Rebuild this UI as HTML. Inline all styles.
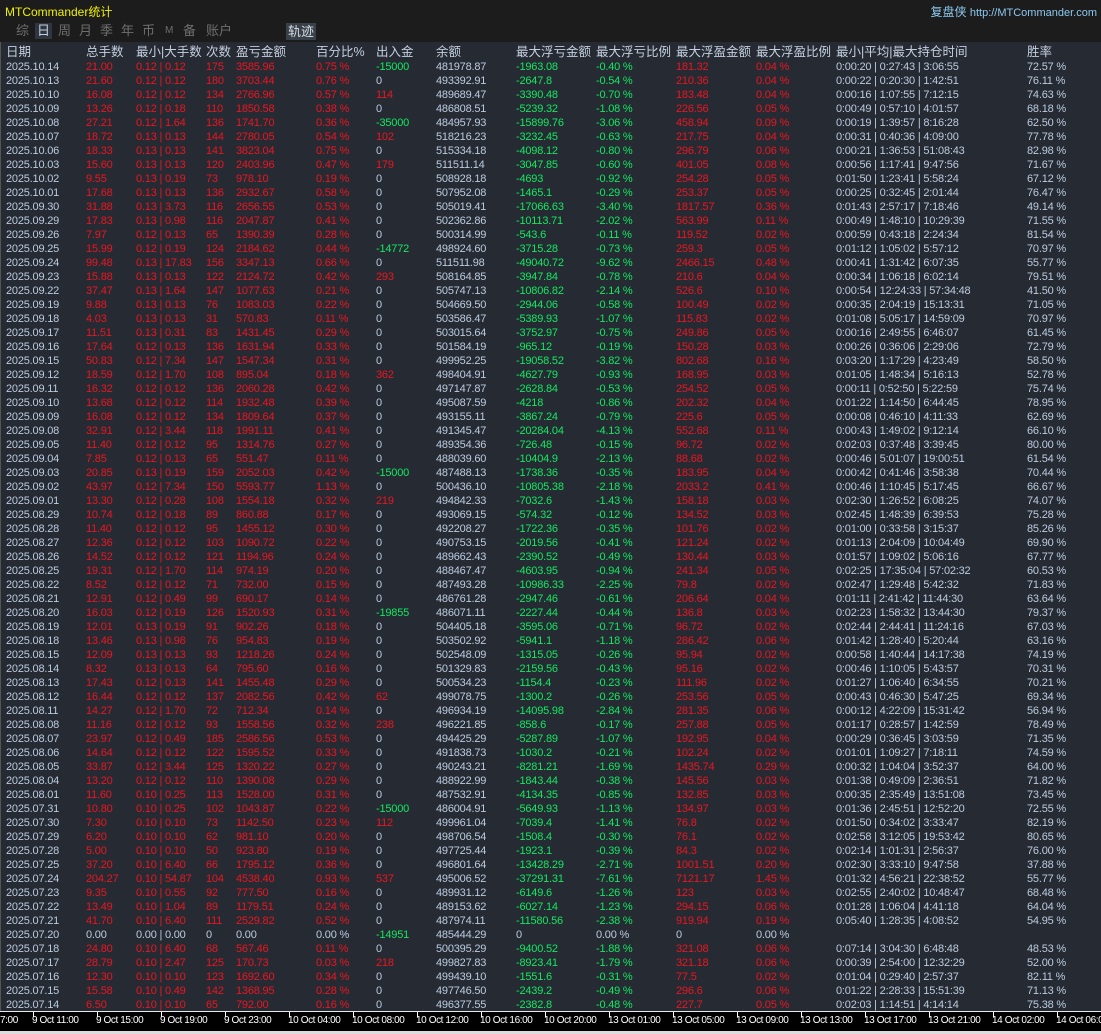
<!DOCTYPE html>
<html><head><meta charset="utf-8"><style>
*{margin:0;padding:0;box-sizing:border-box}
body{width:1101px;height:1034px;background:#dcdcdc;position:relative;overflow:hidden;font-family:"Liberation Sans","Noto Sans CJK SC",sans-serif}
#top{position:absolute;left:0;top:0;width:1101px;height:42px;background:#1c1c1c}
#title{position:absolute;left:5px;top:3px;color:#f0f000;font-size:12px}
#right{position:absolute;right:4px;top:3px;color:#8cc8f0;font-size:12px}
#right span{font-size:11px}
.tab{position:absolute;top:23px;font-size:13px;color:#6e6e6e;line-height:16px}
#sel{background:#2f3641;color:#c4cfdf;padding:0 2px}
#trk{position:absolute;left:286px;top:23px;background:#394049;color:#d8dde5;font-size:13px;line-height:17px;padding:0 2px}
#main{position:absolute;left:0;top:42px;width:1101px;height:969px;background:#262b33;border-left:1px solid #555}
table{position:absolute;left:5px;top:2px;border-collapse:collapse;table-layout:fixed;width:1096px}
td{padding:0;white-space:nowrap;font-size:11px;height:14px;line-height:14px;color:#bccbe0;overflow:hidden;letter-spacing:-0.2px}
tr.h td{font-size:12.5px;height:16px;line-height:16px;color:#c4cfdf;letter-spacing:0}
.r{color:#ec1520}.g{color:#12e860}
#axis{position:absolute;left:0;top:1011px;width:1101px;height:20px;background:#000;border-top:1px solid #e8e8e8}
.lb{position:absolute;top:3px;color:#fff;font-size:10px;letter-spacing:-0.4px;white-space:nowrap}
.tk{position:absolute;top:0;width:1px;height:5px;background:#fff}
</style></head><body>
<div id="top">
<div id="title">MTCommander统计</div>
<div id="right">复盘侠 <span>http://MTCommander.com</span></div>
<div class="tab" style="left:16px">综</div>
<div class="tab" id="sel" style="left:35px">日</div>
<div class="tab" style="left:58px">周</div>
<div class="tab" style="left:79px">月</div>
<div class="tab" style="left:100px">季</div>
<div class="tab" style="left:121px">年</div>
<div class="tab" style="left:142px">币</div>
<div class="tab" style="left:165px;font-size:10px">M</div>
<div class="tab" style="left:183px">备</div>
<div class="tab" style="left:206px">账户</div>
<div id="trk">轨迹</div>
</div>
<div id="main">
<table>
<colgroup><col style="width:80px"><col style="width:50px"><col style="width:70px"><col style="width:30px"><col style="width:80px"><col style="width:60px"><col style="width:60px"><col style="width:80px"><col style="width:80px"><col style="width:80px"><col style="width:80px"><col style="width:80px"><col style="width:191px"><col style="width:75px"></colgroup>
<tr class="h"><td>日期<td>总手数<td>最小|大手数<td>次数<td>盈亏金额<td>百分比%<td>出入金<td>余额<td>最大浮亏金额<td>最大浮亏比例<td>最大浮盈金额<td>最大浮盈比例<td>最小|平均|最大持仓时间<td>胜率
<tr><td>2025.10.14<td class=r>21.00<td class=r>0.12 | 0.12<td class=r>175<td class=r>3585.96<td class=r>0.75 %<td class=g>-15000<td>481978.87<td class=g>-1963.08<td class=g>-0.40 %<td class=r>181.32<td class=r>0.04 %<td>0:00:20 | 0:27:43 | 3:06:55<td>72.57 %
<tr><td>2025.10.13<td class=r>21.60<td class=r>0.12 | 0.12<td class=r>180<td class=r>3703.44<td class=r>0.76 %<td>0<td>493392.91<td class=g>-2647.8<td class=g>-0.54 %<td class=r>210.36<td class=r>0.04 %<td>0:00:22 | 0:20:30 | 1:42:51<td>76.11 %
<tr><td>2025.10.10<td class=r>16.08<td class=r>0.12 | 0.12<td class=r>134<td class=r>2766.96<td class=r>0.57 %<td class=r>114<td>489689.47<td class=g>-3390.48<td class=g>-0.70 %<td class=r>183.48<td class=r>0.04 %<td>0:00:16 | 1:07:55 | 7:12:15<td>74.63 %
<tr><td>2025.10.09<td class=r>13.26<td class=r>0.12 | 0.18<td class=r>110<td class=r>1850.58<td class=r>0.38 %<td>0<td>486808.51<td class=g>-5239.32<td class=g>-1.08 %<td class=r>226.56<td class=r>0.05 %<td>0:00:49 | 0:57:10 | 4:01:57<td>68.18 %
<tr><td>2025.10.08<td class=r>27.21<td class=r>0.12 | 1.64<td class=r>136<td class=r>1741.70<td class=r>0.36 %<td class=g>-35000<td>484957.93<td class=g>-15899.76<td class=g>-3.06 %<td class=r>458.94<td class=r>0.09 %<td>0:00:19 | 1:39:57 | 8:16:28<td>62.50 %
<tr><td>2025.10.07<td class=r>18.72<td class=r>0.13 | 0.13<td class=r>144<td class=r>2780.05<td class=r>0.54 %<td class=r>102<td>518216.23<td class=g>-3232.45<td class=g>-0.63 %<td class=r>217.75<td class=r>0.04 %<td>0:00:31 | 0:40:36 | 4:09:00<td>77.78 %
<tr><td>2025.10.06<td class=r>18.33<td class=r>0.13 | 0.13<td class=r>141<td class=r>3823.04<td class=r>0.75 %<td>0<td>515334.18<td class=g>-4098.12<td class=g>-0.80 %<td class=r>296.79<td class=r>0.06 %<td>0:00:21 | 1:36:53 | 51:08:43<td>82.98 %
<tr><td>2025.10.03<td class=r>15.60<td class=r>0.13 | 0.13<td class=r>120<td class=r>2403.96<td class=r>0.47 %<td class=r>179<td>511511.14<td class=g>-3047.85<td class=g>-0.60 %<td class=r>401.05<td class=r>0.08 %<td>0:00:56 | 1:17:41 | 9:47:56<td>71.67 %
<tr><td>2025.10.02<td class=r>9.55<td class=r>0.13 | 0.19<td class=r>73<td class=r>978.10<td class=r>0.19 %<td>0<td>508928.18<td class=g>-4693<td class=g>-0.92 %<td class=r>254.28<td class=r>0.05 %<td>0:01:50 | 1:23:41 | 5:58:24<td>67.12 %
<tr><td>2025.10.01<td class=r>17.68<td class=r>0.13 | 0.13<td class=r>136<td class=r>2932.67<td class=r>0.58 %<td>0<td>507952.08<td class=g>-1465.1<td class=g>-0.29 %<td class=r>253.37<td class=r>0.05 %<td>0:00:25 | 0:32:45 | 2:01:44<td>76.47 %
<tr><td>2025.09.30<td class=r>31.88<td class=r>0.13 | 3.73<td class=r>116<td class=r>2656.55<td class=r>0.53 %<td>0<td>505019.41<td class=g>-17066.63<td class=g>-3.40 %<td class=r>1817.57<td class=r>0.36 %<td>0:01:43 | 2:57:17 | 7:18:46<td>49.14 %
<tr><td>2025.09.29<td class=r>17.83<td class=r>0.13 | 0.98<td class=r>116<td class=r>2047.87<td class=r>0.41 %<td>0<td>502362.86<td class=g>-10113.71<td class=g>-2.02 %<td class=r>563.99<td class=r>0.11 %<td>0:00:49 | 1:48:10 | 10:29:39<td>71.55 %
<tr><td>2025.09.26<td class=r>7.97<td class=r>0.12 | 0.13<td class=r>65<td class=r>1390.39<td class=r>0.28 %<td>0<td>500314.99<td class=g>-543.6<td class=g>-0.11 %<td class=r>119.52<td class=r>0.02 %<td>0:00:59 | 0:43:18 | 2:24:34<td>81.54 %
<tr><td>2025.09.25<td class=r>15.99<td class=r>0.12 | 0.19<td class=r>124<td class=r>2184.62<td class=r>0.44 %<td class=g>-14772<td>498924.60<td class=g>-3715.28<td class=g>-0.73 %<td class=r>259.3<td class=r>0.05 %<td>0:01:12 | 1:05:02 | 5:57:12<td>70.97 %
<tr><td>2025.09.24<td class=r>99.48<td class=r>0.13 | 17.83<td class=r>156<td class=r>3347.13<td class=r>0.66 %<td>0<td>511511.98<td class=g>-49040.72<td class=g>-9.62 %<td class=r>2466.15<td class=r>0.48 %<td>0:00:41 | 1:31:42 | 6:07:35<td>55.77 %
<tr><td>2025.09.23<td class=r>15.88<td class=r>0.13 | 0.13<td class=r>122<td class=r>2124.72<td class=r>0.42 %<td class=r>293<td>508164.85<td class=g>-3947.84<td class=g>-0.78 %<td class=r>210.6<td class=r>0.04 %<td>0:00:34 | 1:06:18 | 6:02:14<td>79.51 %
<tr><td>2025.09.22<td class=r>37.47<td class=r>0.13 | 1.64<td class=r>147<td class=r>1077.63<td class=r>0.21 %<td>0<td>505747.13<td class=g>-10806.82<td class=g>-2.14 %<td class=r>526.6<td class=r>0.10 %<td>0:00:54 | 12:24:33 | 57:34:48<td>41.50 %
<tr><td>2025.09.19<td class=r>9.88<td class=r>0.13 | 0.13<td class=r>76<td class=r>1083.03<td class=r>0.22 %<td>0<td>504669.50<td class=g>-2944.06<td class=g>-0.58 %<td class=r>100.49<td class=r>0.02 %<td>0:00:35 | 2:04:19 | 15:13:31<td>71.05 %
<tr><td>2025.09.18<td class=r>4.03<td class=r>0.13 | 0.13<td class=r>31<td class=r>570.83<td class=r>0.11 %<td>0<td>503586.47<td class=g>-5389.93<td class=g>-1.07 %<td class=r>115.83<td class=r>0.02 %<td>0:01:08 | 5:05:17 | 14:59:09<td>70.97 %
<tr><td>2025.09.17<td class=r>11.51<td class=r>0.13 | 0.31<td class=r>83<td class=r>1431.45<td class=r>0.29 %<td>0<td>503015.64<td class=g>-3752.97<td class=g>-0.75 %<td class=r>249.86<td class=r>0.05 %<td>0:00:16 | 2:49:55 | 6:46:07<td>61.45 %
<tr><td>2025.09.16<td class=r>17.64<td class=r>0.12 | 0.13<td class=r>136<td class=r>1631.94<td class=r>0.33 %<td>0<td>501584.19<td class=g>-965.12<td class=g>-0.19 %<td class=r>150.28<td class=r>0.03 %<td>0:00:26 | 0:36:06 | 2:29:06<td>72.79 %
<tr><td>2025.09.15<td class=r>50.83<td class=r>0.12 | 7.34<td class=r>147<td class=r>1547.34<td class=r>0.31 %<td>0<td>499952.25<td class=g>-19058.52<td class=g>-3.82 %<td class=r>802.68<td class=r>0.16 %<td>0:03:20 | 1:17:29 | 4:23:49<td>58.50 %
<tr><td>2025.09.12<td class=r>18.59<td class=r>0.12 | 1.70<td class=r>108<td class=r>895.04<td class=r>0.18 %<td class=r>362<td>498404.91<td class=g>-4627.79<td class=g>-0.93 %<td class=r>168.95<td class=r>0.03 %<td>0:01:05 | 1:48:34 | 5:16:13<td>52.78 %
<tr><td>2025.09.11<td class=r>16.32<td class=r>0.12 | 0.12<td class=r>136<td class=r>2060.28<td class=r>0.42 %<td>0<td>497147.87<td class=g>-2628.84<td class=g>-0.53 %<td class=r>254.52<td class=r>0.05 %<td>0:00:11 | 0:52:50 | 5:22:59<td>75.74 %
<tr><td>2025.09.10<td class=r>13.68<td class=r>0.12 | 0.12<td class=r>114<td class=r>1932.48<td class=r>0.39 %<td>0<td>495087.59<td class=g>-4218<td class=g>-0.86 %<td class=r>202.32<td class=r>0.04 %<td>0:01:22 | 1:14:50 | 6:44:45<td>78.95 %
<tr><td>2025.09.09<td class=r>16.08<td class=r>0.12 | 0.12<td class=r>134<td class=r>1809.64<td class=r>0.37 %<td>0<td>493155.11<td class=g>-3867.24<td class=g>-0.79 %<td class=r>225.6<td class=r>0.05 %<td>0:00:08 | 0:46:10 | 4:11:33<td>62.69 %
<tr><td>2025.09.08<td class=r>32.91<td class=r>0.12 | 3.44<td class=r>118<td class=r>1991.11<td class=r>0.41 %<td>0<td>491345.47<td class=g>-20284.04<td class=g>-4.13 %<td class=r>552.68<td class=r>0.11 %<td>0:00:43 | 1:49:02 | 9:12:14<td>66.10 %
<tr><td>2025.09.05<td class=r>11.40<td class=r>0.12 | 0.12<td class=r>95<td class=r>1314.76<td class=r>0.27 %<td>0<td>489354.36<td class=g>-726.48<td class=g>-0.15 %<td class=r>96.72<td class=r>0.02 %<td>0:02:03 | 0:37:48 | 3:39:45<td>80.00 %
<tr><td>2025.09.04<td class=r>7.85<td class=r>0.12 | 0.13<td class=r>65<td class=r>551.47<td class=r>0.11 %<td>0<td>488039.60<td class=g>-10404.9<td class=g>-2.13 %<td class=r>88.68<td class=r>0.02 %<td>0:00:46 | 5:01:07 | 19:00:51<td>61.54 %
<tr><td>2025.09.03<td class=r>20.85<td class=r>0.13 | 0.19<td class=r>159<td class=r>2052.03<td class=r>0.42 %<td class=g>-15000<td>487488.13<td class=g>-1738.36<td class=g>-0.35 %<td class=r>183.95<td class=r>0.04 %<td>0:00:42 | 0:41:46 | 3:58:38<td>70.44 %
<tr><td>2025.09.02<td class=r>43.97<td class=r>0.12 | 7.34<td class=r>150<td class=r>5593.77<td class=r>1.13 %<td>0<td>500436.10<td class=g>-10805.38<td class=g>-2.18 %<td class=r>2033.2<td class=r>0.41 %<td>0:00:46 | 1:10:45 | 5:17:45<td>66.67 %
<tr><td>2025.09.01<td class=r>13.30<td class=r>0.12 | 0.28<td class=r>108<td class=r>1554.18<td class=r>0.32 %<td class=r>219<td>494842.33<td class=g>-7032.6<td class=g>-1.43 %<td class=r>158.18<td class=r>0.03 %<td>0:02:30 | 1:26:52 | 6:08:25<td>74.07 %
<tr><td>2025.08.29<td class=r>10.74<td class=r>0.12 | 0.18<td class=r>89<td class=r>860.88<td class=r>0.17 %<td>0<td>493069.15<td class=g>-574.32<td class=g>-0.12 %<td class=r>134.52<td class=r>0.03 %<td>0:02:45 | 1:48:39 | 6:39:53<td>75.28 %
<tr><td>2025.08.28<td class=r>11.40<td class=r>0.12 | 0.12<td class=r>95<td class=r>1455.12<td class=r>0.30 %<td>0<td>492208.27<td class=g>-1722.36<td class=g>-0.35 %<td class=r>101.76<td class=r>0.02 %<td>0:01:00 | 0:33:58 | 3:15:37<td>85.26 %
<tr><td>2025.08.27<td class=r>12.36<td class=r>0.12 | 0.12<td class=r>103<td class=r>1090.72<td class=r>0.22 %<td>0<td>490753.15<td class=g>-2019.56<td class=g>-0.41 %<td class=r>121.24<td class=r>0.02 %<td>0:01:13 | 2:04:09 | 10:04:49<td>69.90 %
<tr><td>2025.08.26<td class=r>14.52<td class=r>0.12 | 0.12<td class=r>121<td class=r>1194.96<td class=r>0.24 %<td>0<td>489662.43<td class=g>-2390.52<td class=g>-0.49 %<td class=r>130.44<td class=r>0.03 %<td>0:01:57 | 1:09:02 | 5:06:16<td>67.77 %
<tr><td>2025.08.25<td class=r>19.31<td class=r>0.12 | 1.70<td class=r>114<td class=r>974.19<td class=r>0.20 %<td>0<td>488467.47<td class=g>-4603.95<td class=g>-0.94 %<td class=r>241.34<td class=r>0.05 %<td>0:02:25 | 17:35:04 | 57:02:32<td>60.53 %
<tr><td>2025.08.22<td class=r>8.52<td class=r>0.12 | 0.12<td class=r>71<td class=r>732.00<td class=r>0.15 %<td>0<td>487493.28<td class=g>-10986.33<td class=g>-2.25 %<td class=r>79.8<td class=r>0.02 %<td>0:02:47 | 1:29:48 | 5:42:32<td>71.83 %
<tr><td>2025.08.21<td class=r>12.91<td class=r>0.12 | 0.49<td class=r>99<td class=r>690.17<td class=r>0.14 %<td>0<td>486761.28<td class=g>-2947.46<td class=g>-0.61 %<td class=r>206.64<td class=r>0.04 %<td>0:01:11 | 2:41:42 | 11:44:30<td>63.64 %
<tr><td>2025.08.20<td class=r>16.03<td class=r>0.12 | 0.19<td class=r>126<td class=r>1520.93<td class=r>0.31 %<td class=g>-19855<td>486071.11<td class=g>-2227.44<td class=g>-0.44 %<td class=r>136.8<td class=r>0.03 %<td>0:02:23 | 1:58:32 | 13:44:30<td>79.37 %
<tr><td>2025.08.19<td class=r>12.01<td class=r>0.13 | 0.19<td class=r>91<td class=r>902.26<td class=r>0.18 %<td>0<td>504405.18<td class=g>-3595.06<td class=g>-0.71 %<td class=r>96.72<td class=r>0.02 %<td>0:02:44 | 2:44:41 | 11:24:16<td>67.03 %
<tr><td>2025.08.18<td class=r>13.46<td class=r>0.13 | 0.98<td class=r>76<td class=r>954.83<td class=r>0.19 %<td>0<td>503502.92<td class=g>-5941.1<td class=g>-1.18 %<td class=r>286.42<td class=r>0.06 %<td>0:01:42 | 1:28:40 | 5:20:44<td>63.16 %
<tr><td>2025.08.15<td class=r>12.09<td class=r>0.13 | 0.13<td class=r>93<td class=r>1218.26<td class=r>0.24 %<td>0<td>502548.09<td class=g>-1315.05<td class=g>-0.26 %<td class=r>95.94<td class=r>0.02 %<td>0:00:58 | 1:40:44 | 14:17:38<td>74.19 %
<tr><td>2025.08.14<td class=r>8.32<td class=r>0.13 | 0.13<td class=r>64<td class=r>795.60<td class=r>0.16 %<td>0<td>501329.83<td class=g>-2159.56<td class=g>-0.43 %<td class=r>95.16<td class=r>0.02 %<td>0:00:46 | 1:10:05 | 5:43:57<td>70.31 %
<tr><td>2025.08.13<td class=r>17.43<td class=r>0.12 | 0.13<td class=r>141<td class=r>1455.48<td class=r>0.29 %<td>0<td>500534.23<td class=g>-1154.4<td class=g>-0.23 %<td class=r>111.96<td class=r>0.02 %<td>0:01:27 | 1:06:40 | 6:34:55<td>70.21 %
<tr><td>2025.08.12<td class=r>16.44<td class=r>0.12 | 0.12<td class=r>137<td class=r>2082.56<td class=r>0.42 %<td class=r>62<td>499078.75<td class=g>-1300.2<td class=g>-0.26 %<td class=r>253.56<td class=r>0.05 %<td>0:00:43 | 0:46:30 | 5:47:25<td>69.34 %
<tr><td>2025.08.11<td class=r>14.27<td class=r>0.12 | 1.70<td class=r>72<td class=r>712.34<td class=r>0.14 %<td>0<td>496934.19<td class=g>-14095.98<td class=g>-2.84 %<td class=r>281.35<td class=r>0.06 %<td>0:00:12 | 4:22:09 | 15:31:42<td>56.94 %
<tr><td>2025.08.08<td class=r>11.16<td class=r>0.12 | 0.12<td class=r>93<td class=r>1558.56<td class=r>0.32 %<td class=r>238<td>496221.85<td class=g>-858.6<td class=g>-0.17 %<td class=r>257.88<td class=r>0.05 %<td>0:01:17 | 0:28:57 | 1:42:59<td>78.49 %
<tr><td>2025.08.07<td class=r>23.97<td class=r>0.12 | 0.49<td class=r>185<td class=r>2586.56<td class=r>0.53 %<td>0<td>494425.29<td class=g>-5287.89<td class=g>-1.07 %<td class=r>192.95<td class=r>0.04 %<td>0:00:29 | 0:36:45 | 3:03:59<td>71.35 %
<tr><td>2025.08.06<td class=r>14.64<td class=r>0.12 | 0.12<td class=r>122<td class=r>1595.52<td class=r>0.33 %<td>0<td>491838.73<td class=g>-1030.2<td class=g>-0.21 %<td class=r>102.24<td class=r>0.02 %<td>0:01:01 | 1:09:27 | 7:18:11<td>74.59 %
<tr><td>2025.08.05<td class=r>33.87<td class=r>0.12 | 3.44<td class=r>125<td class=r>1320.22<td class=r>0.27 %<td>0<td>490243.21<td class=g>-8281.21<td class=g>-1.69 %<td class=r>1435.74<td class=r>0.29 %<td>0:00:32 | 1:04:04 | 3:52:37<td>64.00 %
<tr><td>2025.08.04<td class=r>13.20<td class=r>0.12 | 0.12<td class=r>110<td class=r>1390.08<td class=r>0.29 %<td>0<td>488922.99<td class=g>-1843.44<td class=g>-0.38 %<td class=r>145.56<td class=r>0.03 %<td>0:01:38 | 0:49:09 | 2:36:51<td>71.82 %
<tr><td>2025.08.01<td class=r>11.60<td class=r>0.10 | 0.25<td class=r>113<td class=r>1528.00<td class=r>0.31 %<td>0<td>487532.91<td class=g>-4134.35<td class=g>-0.85 %<td class=r>132.85<td class=r>0.03 %<td>0:00:35 | 2:35:49 | 13:51:08<td>73.45 %
<tr><td>2025.07.31<td class=r>10.80<td class=r>0.10 | 0.25<td class=r>102<td class=r>1043.87<td class=r>0.22 %<td class=g>-15000<td>486004.91<td class=g>-5649.93<td class=g>-1.13 %<td class=r>134.97<td class=r>0.03 %<td>0:01:36 | 2:45:51 | 12:52:20<td>72.55 %
<tr><td>2025.07.30<td class=r>7.30<td class=r>0.10 | 0.10<td class=r>73<td class=r>1142.50<td class=r>0.23 %<td class=r>112<td>499961.04<td class=g>-7039.4<td class=g>-1.41 %<td class=r>76.8<td class=r>0.02 %<td>0:01:50 | 0:34:02 | 3:33:47<td>82.19 %
<tr><td>2025.07.29<td class=r>6.20<td class=r>0.10 | 0.10<td class=r>62<td class=r>981.10<td class=r>0.20 %<td>0<td>498706.54<td class=g>-1508.4<td class=g>-0.30 %<td class=r>76.1<td class=r>0.02 %<td>0:02:58 | 3:12:05 | 19:53:42<td>80.65 %
<tr><td>2025.07.28<td class=r>5.00<td class=r>0.10 | 0.10<td class=r>50<td class=r>923.80<td class=r>0.19 %<td>0<td>497725.44<td class=g>-1923.1<td class=g>-0.39 %<td class=r>84.3<td class=r>0.02 %<td>0:02:14 | 1:01:31 | 2:56:37<td>76.00 %
<tr><td>2025.07.25<td class=r>37.20<td class=r>0.10 | 6.40<td class=r>66<td class=r>1795.12<td class=r>0.36 %<td>0<td>496801.64<td class=g>-13428.29<td class=g>-2.71 %<td class=r>1001.51<td class=r>0.20 %<td>0:02:30 | 3:33:10 | 9:47:58<td>37.88 %
<tr><td>2025.07.24<td class=r>204.27<td class=r>0.10 | 54.87<td class=r>104<td class=r>4538.40<td class=r>0.93 %<td class=r>537<td>495006.52<td class=g>-37291.31<td class=g>-7.61 %<td class=r>7121.17<td class=r>1.45 %<td>0:01:32 | 4:56:21 | 22:38:52<td>55.77 %
<tr><td>2025.07.23<td class=r>9.35<td class=r>0.10 | 0.55<td class=r>92<td class=r>777.50<td class=r>0.16 %<td>0<td>489931.12<td class=g>-6149.6<td class=g>-1.26 %<td class=r>123<td class=r>0.03 %<td>0:02:55 | 2:40:02 | 10:48:47<td>68.48 %
<tr><td>2025.07.22<td class=r>13.49<td class=r>0.10 | 1.04<td class=r>89<td class=r>1179.51<td class=r>0.24 %<td>0<td>489153.62<td class=g>-6027.14<td class=g>-1.23 %<td class=r>294.15<td class=r>0.06 %<td>0:01:28 | 1:06:04 | 4:41:18<td>64.04 %
<tr><td>2025.07.21<td class=r>41.70<td class=r>0.10 | 6.40<td class=r>111<td class=r>2529.82<td class=r>0.52 %<td>0<td>487974.11<td class=g>-11580.56<td class=g>-2.38 %<td class=r>919.94<td class=r>0.19 %<td>0:05:40 | 1:28:35 | 4:08:52<td>54.95 %
<tr><td>2025.07.20<td>0.00<td>0.00 | 0.00<td>0<td>0.00<td>0.00 %<td class=g>-14951<td>485444.29<td>0<td>0.00 %<td>0<td>0.00 %<td><td>
<tr><td>2025.07.18<td class=r>24.80<td class=r>0.10 | 6.40<td class=r>68<td class=r>567.46<td class=r>0.11 %<td>0<td>500395.29<td class=g>-9400.52<td class=g>-1.88 %<td class=r>321.08<td class=r>0.06 %<td>0:07:14 | 3:04:30 | 6:48:48<td>48.53 %
<tr><td>2025.07.17<td class=r>28.79<td class=r>0.10 | 2.47<td class=r>125<td class=r>170.73<td class=r>0.03 %<td class=r>218<td>499827.83<td class=g>-8923.41<td class=g>-1.79 %<td class=r>321.18<td class=r>0.06 %<td>0:00:39 | 2:54:00 | 12:32:29<td>52.00 %
<tr><td>2025.07.16<td class=r>12.30<td class=r>0.10 | 0.10<td class=r>123<td class=r>1692.60<td class=r>0.34 %<td>0<td>499439.10<td class=g>-1551.6<td class=g>-0.31 %<td class=r>77.5<td class=r>0.02 %<td>0:01:04 | 0:29:40 | 2:57:37<td>82.11 %
<tr><td>2025.07.15<td class=r>15.58<td class=r>0.10 | 0.49<td class=r>142<td class=r>1368.95<td class=r>0.28 %<td>0<td>497746.50<td class=g>-2439.2<td class=g>-0.49 %<td class=r>296.6<td class=r>0.06 %<td>0:01:22 | 2:28:33 | 15:51:39<td>71.13 %
<tr><td>2025.07.14<td class=r>6.50<td class=r>0.10 | 0.10<td class=r>65<td class=r>792.00<td class=r>0.16 %<td>0<td>496377.55<td class=g>-2382.8<td class=g>-0.48 %<td class=r>227.7<td class=r>0.05 %<td>0:02:03 | 1:14:51 | 4:14:14<td>75.38 %
</table>
</div>
<div id="axis">
<div class="lb" style="left:0">7:00</div>
<div class="tk" style="left:33px"></div><div class="lb" style="left:32px">9 Oct 11:00</div>
<div class="tk" style="left:97px"></div><div class="lb" style="left:96px">9 Oct 15:00</div>
<div class="tk" style="left:161px"></div><div class="lb" style="left:160px">9 Oct 19:00</div>
<div class="tk" style="left:225px"></div><div class="lb" style="left:224px">9 Oct 23:00</div>
<div class="tk" style="left:289px"></div><div class="lb" style="left:288px">10 Oct 04:00</div>
<div class="tk" style="left:353px"></div><div class="lb" style="left:352px">10 Oct 08:00</div>
<div class="tk" style="left:417px"></div><div class="lb" style="left:416px">10 Oct 12:00</div>
<div class="tk" style="left:481px"></div><div class="lb" style="left:480px">10 Oct 16:00</div>
<div class="tk" style="left:545px"></div><div class="lb" style="left:544px">10 Oct 20:00</div>
<div class="tk" style="left:609px"></div><div class="lb" style="left:608px">13 Oct 01:00</div>
<div class="tk" style="left:673px"></div><div class="lb" style="left:672px">13 Oct 05:00</div>
<div class="tk" style="left:737px"></div><div class="lb" style="left:736px">13 Oct 09:00</div>
<div class="tk" style="left:801px"></div><div class="lb" style="left:800px">13 Oct 13:00</div>
<div class="tk" style="left:865px"></div><div class="lb" style="left:864px">13 Oct 17:00</div>
<div class="tk" style="left:929px"></div><div class="lb" style="left:928px">13 Oct 21:00</div>
<div class="tk" style="left:993px"></div><div class="lb" style="left:992px">14 Oct 02:00</div>
<div class="tk" style="left:1057px"></div><div class="lb" style="left:1056px">14 Oct 06:00</div>
</div>
</body></html>
